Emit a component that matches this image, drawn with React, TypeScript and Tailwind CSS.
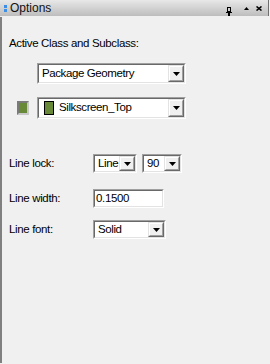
import React from "react";

const font = { fontFamily: '"Liberation Sans", Arial, sans-serif' };

function Arrow() {
  return (
    <svg width="7" height="4" viewBox="0 0 7 4">
      <polygon points="0,0 7,0 3.5,4" fill="#000" />
    </svg>
  );
}

function Sunken({ className, children }: { className: string; children: React.ReactNode }) {
  return (
    <div className={`border border-t-[#a0a0a0] border-l-[#a0a0a0] border-b-white border-r-white ${className}`}>
      <div className="w-full h-full border border-t-[#696969] border-l-[#696969] border-b-[#e3e3e3] border-r-[#e3e3e3] bg-white flex items-stretch">
        {children}
      </div>
    </div>
  );
}

function DropBtn() {
  return (
    <div className="w-[16px] shrink-0 bg-[#f0f0f0] border border-t-[#e3e3e3] border-l-[#e3e3e3] border-b-[#696969] border-r-[#696969] flex">
      <div className="flex-1 border border-t-white border-l-white border-b-[#a0a0a0] border-r-[#a0a0a0] flex items-center justify-center">
        <Arrow />
      </div>
    </div>
  );
}

function Combo({ className, text, swatch }: { className: string; text: string; swatch?: boolean }) {
  return (
    <Sunken className={className}>
      <div className="flex-1 flex items-center pl-[3px] gap-[5px] text-[11.5px] text-black overflow-hidden whitespace-nowrap tracking-[-0.4px]">
        {swatch && <div className="w-[10px] h-[14px] border border-black bg-[#688a38] ml-[2px] shrink-0" />}
        <span>{text}</span>
      </div>
      <DropBtn />
    </Sunken>
  );
}

export default function App() {
  return (
    <div className="w-[270px] h-[364px] bg-[#f0f0f0] flex flex-col" style={font}>
      <div className="h-[16px] w-[269px] border-r border-r-[#6e6e6e] bg-gradient-to-b from-[#e8e8e8] to-[#bdbdbd] flex items-center">
        <div className="ml-[4px] flex flex-col gap-[1px]">
          <div className="w-[3px] h-[3px] bg-[#3d8ee6]" />
          <div className="w-[3px] h-[3px] bg-[#3d8ee6]" />
        </div>
        <span className="ml-[3px] text-[12px] text-[#111]">Options</span>
        <div className="ml-auto flex items-center mr-[6px]">
          <svg width="6" height="9" viewBox="0 0 6 9" className="mt-[6px]">
            <rect x="1.5" y="0.5" width="3" height="4" fill="none" stroke="#000" />
            <rect x="0" y="5" width="6" height="1" fill="#000" />
            <rect x="2" y="6" width="2" height="3" fill="#000" />
          </svg>
          <svg width="5" height="3" viewBox="0 0 5 3" className="ml-[12px]">
            <polygon points="2.5,0 5,3 0,3" fill="#000" />
          </svg>
          <svg width="6" height="5" viewBox="0 0 6 5" className="ml-[7px]">
            <path d="M0.5 0.5 L5.5 4.5 M5.5 0.5 L0.5 4.5" stroke="#000" strokeWidth="1.6" />
          </svg>
        </div>
      </div>
      <div className="flex-1 mt-[1px] mb-[1px] border-l-2 border-l-[#808080] flex flex-col text-[11.5px] text-black tracking-[-0.35px]">
        <div className="ml-[7px] mt-[20px] leading-[13px]">Active Class and Subclass:</div>
        <div className="mt-[13px] ml-[35px]">
          <Combo className="w-[149px] h-[21px]" text="Package Geometry" />
        </div>
        <div className="mt-[13px] flex items-center">
          <div className="ml-[15px] w-[12px] h-[14px] border-2 border-t-[#7a7a7a] border-l-[#7a7a7a] border-b-[#c8c8c8] border-r-[#c8c8c8] bg-[#688a38]" />
          <div className="ml-[8px]">
            <Combo className="w-[149px] h-[22px]" text="Silkscreen_Top" swatch />
          </div>
        </div>
        <div className="mt-[35px] flex items-center h-[19px]">
          <span className="ml-[7px] w-[84px]">Line lock:</span>
          <Combo className="w-[44px] h-[19px]" text="Line" />
          <div className="ml-[5px]">
            <Combo className="w-[40px] h-[19px]" text="90" />
          </div>
        </div>
        <div className="mt-[16px] flex items-center h-[19px]">
          <span className="ml-[7px] w-[84px]">Line width:</span>
          <Sunken className="w-[71px] h-[19px]">
            <div className="flex items-center pl-[1px]">0.1500</div>
          </Sunken>
        </div>
        <div className="mt-[12px] flex items-center h-[19px]">
          <span className="ml-[7px] w-[84px]">Line font:</span>
          <Combo className="w-[73px] h-[19px]" text="Solid" />
        </div>
      </div>
    </div>
  );
}
